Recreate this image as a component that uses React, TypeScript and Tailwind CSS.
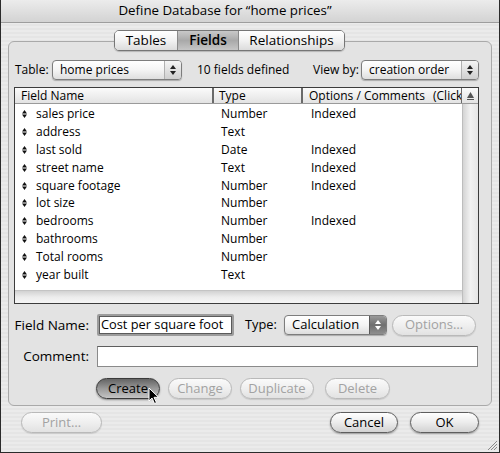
import React from "react";

const rows: [string, string, string][] = [
  ["sales price", "Number", "Indexed"],
  ["address", "Text", ""],
  ["last sold", "Date", "Indexed"],
  ["street name", "Text", "Indexed"],
  ["square footage", "Number", "Indexed"],
  ["lot size", "Number", ""],
  ["bedrooms", "Number", "Indexed"],
  ["bathrooms", "Number", ""],
  ["Total rooms", "Number", ""],
  ["year built", "Text", ""],
];

function Arrows({ light }: { light?: boolean }) {
  const c = light ? "#ffffff" : "#222222";
  return (
    <svg width="6" height="10" viewBox="0 0 6 10">
      <polygon points="3,0 6,4 0,4" fill={c} />
      <polygon points="0,6 6,6 3,10" fill={c} />
    </svg>
  );
}

function Popup({ label, w, dark, size }: { label: string; w: string; dark?: boolean; size?: string }) {
  return (
    <div
      className={`flex h-[20px] ${w} items-stretch overflow-hidden rounded-[4px] border border-[#7d7d7d] bg-gradient-to-b from-white via-[#f4f4f4] to-[#dedede] shadow-[0_1px_1px_rgba(0,0,0,0.25)]`}
    >
      <span className={`flex flex-1 items-center truncate pl-[7px] ${size ?? "text-[12px]"} text-black`}>{label}</span>
      <span
        className={`flex w-[17px] items-center justify-center border-l ${
          dark
            ? "border-[#5a5a5a] bg-gradient-to-b from-[#9a9a9a] via-[#6f6f6f] to-[#8f8f8f]"
            : "border-[#b0b0b0] bg-gradient-to-b from-[#f4f4f4] to-[#cfcfcf]"
        }`}
      >
        <Arrows light={dark} />
      </span>
    </div>
  );
}

function Btn({
  label,
  w,
  disabled,
  pressed,
}: {
  label: string;
  w: string;
  disabled?: boolean;
  pressed?: boolean;
}) {
  let cls =
    "border-[#5e5e5e] bg-gradient-to-b from-white via-[#ececec] to-[#d2d2d2] text-black shadow-[0_1px_2px_rgba(0,0,0,0.35)]";
  if (disabled)
    cls =
      "border-[#b9b9b9] bg-gradient-to-b from-[#fafafa] via-[#efefef] to-[#e2e2e2] text-[#a2a2a2] shadow-[0_1px_1px_rgba(0,0,0,0.12)]";
  if (pressed)
    cls =
      "border-[#3a3a3a] bg-gradient-to-b from-[#646464] via-[#9a9a9a] to-[#c4c4c4] text-black shadow-[0_1px_2px_rgba(0,0,0,0.4)]";
  return (
    <div
      className={`flex h-[21px] ${w} items-center justify-center rounded-full border text-[13px] ${cls}`}
    >
      {label}
    </div>
  );
}

export default function App() {
  return (
    <div
      className="relative flex h-[453px] w-[500px] flex-col overflow-hidden border-x border-b border-[#2b2b2b] bg-[repeating-linear-gradient(0deg,#ebebeb_0px,#ebebeb_2px,#e5e5e5_2px,#e5e5e5_4px)] text-black"
      style={{ fontFamily: '"Open Sans", "DejaVu Sans", sans-serif' }}
    >
      {/* title bar */}
      <div className="flex h-[23px] shrink-0 items-center justify-center border-b border-[#9d9d9d] bg-gradient-to-b from-[#ececec] to-[#d3d3d3] text-[13.3px]">
        <span className="-ml-[50px]">Define Database for “home prices”</span>
      </div>

      {/* group box */}
      <div className="ml-[7px] mt-[18px] flex h-[365px] w-[484px] flex-col rounded-[6px] border border-[#a9a9a9] bg-[#e3e3e3]">
        {/* tabs */}
        <div className="-mt-[12px] ml-[105px] flex h-[21px] w-[231px] overflow-hidden rounded-[5px] border border-[#767676] text-[13.5px] shadow-[0_1px_1px_rgba(0,0,0,0.2)]">
          <div className="flex w-[62px] items-center justify-center bg-gradient-to-b from-white via-[#f2f2f2] to-[#dcdcdc]">
            Tables
          </div>
          <div className="flex w-[62px] items-center justify-center border-x border-[#8a8a8a] bg-gradient-to-b from-[#c9c9c9] via-[#a9a9a9] to-[#c6c6c6] font-semibold">
            Fields
          </div>
          <div className="flex flex-1 items-center justify-center bg-gradient-to-b from-white via-[#f2f2f2] to-[#dcdcdc]">
            Relationships
          </div>
        </div>

        {/* table row */}
        <div className="mt-[9px] flex h-[20px] items-center text-[12px]">
          <span className="ml-[6px] w-[37px]">Table:</span>
          <Popup label="home prices" w="w-[130px]" />
          <span className="ml-[15px] w-[116px]">10 fields defined</span>
          <span className="w-[48px]">View by:</span>
          <Popup label="creation order" w="w-[118px]" />
        </div>

        {/* list */}
        <div className="ml-[5px] mt-[7px] flex h-[217px] w-[465px] flex-col border border-[#3c3c3c] bg-white text-[12px]">
          <div className="flex h-[16px] shrink-0 border-b border-[#9a9a9a] bg-gradient-to-b from-[#fbfbfb] to-[#e3e3e3] text-[12px] leading-[16px]">
            <div className="w-[199px] border-r-2 border-[#6a6a6a] pl-[6px]">Field Name</div>
            <div className="w-[89px] border-r-2 border-[#6a6a6a] pl-[5px]">Type</div>
            <div className="flex w-[159px] overflow-hidden whitespace-nowrap border-r border-[#6a6a6a] pl-[6px]">
              <span>Options / Comments</span>
              <span className="ml-[8px]">(Click</span>
            </div>
            <div className="flex flex-1 items-center justify-center">
              <svg width="7" height="8" viewBox="0 0 7 8">
                <polygon points="3.5,0 7,6 0,6" fill="#555" />
                <rect x="0" y="7" width="7" height="1" fill="#555" />
              </svg>
            </div>
          </div>
          <div className="flex flex-1">
            <div className="flex flex-1 flex-col">
              <div className="flex-1 pt-[1px]">
                {rows.map(([n, t, o]) => (
                  <div key={n} className="flex h-[17.9px] items-center leading-none">
                    <div className="flex w-[200px] items-center">
                      <span className="ml-[7px] mr-[9px] flex">
                        <svg width="5" height="8" viewBox="0 0 5 8">
                          <polygon points="2.5,0 5,3.4 0,3.4" fill="#111" />
                          <polygon points="0,4.6 5,4.6 2.5,8" fill="#111" />
                        </svg>
                      </span>
                      {n}
                    </div>
                    <div className="w-[89px] pl-[6px]">{t}</div>
                    <div className="pl-[7px]">{o}</div>
                  </div>
                ))}
              </div>
              <div className="h-[13px] border-t border-[#c4c4c4] bg-gradient-to-b from-[#d2d2d2] via-[#ececec] to-[#f5f5f5]" />
            </div>
            <div className="w-[16px] border-l border-[#bdbdbd] bg-gradient-to-r from-[#d4d4d4] via-[#f2f2f2] to-[#e6e6e6]" />
          </div>
        </div>

        {/* field name row */}
        <div className="mt-[10px] flex h-[22px] items-center">
          <span className="w-[80px] text-right text-[13.5px]">Field Name:</span>
          <div className="ml-[8px] flex h-[22px] w-[137px] items-center rounded-[2px] border-[2px] border-[#9c9c9c] bg-white pl-[2px] text-[12.8px] shadow-[inset_0_0_0_1px_#5a5a5a]">
            Cost per square foot
          </div>
          <span className="ml-[11px] w-[39px] text-[12.8px]">Type:</span>
          <Popup label="Calculation" w="w-[103px]" dark size="text-[13px]" />
          <div className="ml-[5px]">
            <Btn label="Options…" w="w-[84px]" disabled />
          </div>
        </div>

        {/* comment row */}
        <div className="mt-[9px] flex h-[22px] items-center">
          <span className="w-[80px] text-right text-[13.5px]">Comment:</span>
          <div className="ml-[8px] h-[21px] w-[381px] border border-[#8a8a8a] border-t-[#5e5e5e] bg-white" />
        </div>

        {/* buttons */}
        <div className="mt-[11px] flex items-center">
          <div className="ml-[87px]">
            <Btn label="Create" w="w-[64px]" pressed />
          </div>
          <div className="ml-[8px]">
            <Btn label="Change" w="w-[64px]" disabled />
          </div>
          <div className="ml-[8px]">
            <Btn label="Duplicate" w="w-[74px]" disabled />
          </div>
          <div className="ml-[11px]">
            <Btn label="Delete" w="w-[65px]" disabled />
          </div>
        </div>
      </div>

      {/* bottom buttons */}
      <div className="mt-[6px] flex items-center">
        <div className="ml-[20px]">
          <Btn label="Print…" w="w-[81px]" disabled />
        </div>
        <div className="ml-auto">
          <Btn label="Cancel" w="w-[68px]" />
        </div>
        <div className="ml-[12px] mr-[20px]">
          <Btn label="OK" w="w-[69px]" />
        </div>
      </div>

      {/* mouse cursor */}
      <svg
        className="absolute left-[147px] top-[387px]"
        width="12"
        height="18"
        viewBox="0 0 12 18"
      >
        <path d="M1 1 L1 14 L4 11 L6.5 16.5 L8.5 15.6 L6 10.3 L10.5 10.3 Z" fill="#000" stroke="#fff" strokeWidth="1" />
      </svg>

      {/* resize grip */}
      <svg className="absolute bottom-[1px] right-[1px]" width="12" height="12" viewBox="0 0 12 12">
        <line x1="11" y1="2" x2="2" y2="11" stroke="#8a8a8a" strokeWidth="1" />
        <line x1="11" y1="5" x2="5" y2="11" stroke="#8a8a8a" strokeWidth="1" />
        <line x1="11" y1="8" x2="8" y2="11" stroke="#8a8a8a" strokeWidth="1" />
      </svg>
    </div>
  );
}
